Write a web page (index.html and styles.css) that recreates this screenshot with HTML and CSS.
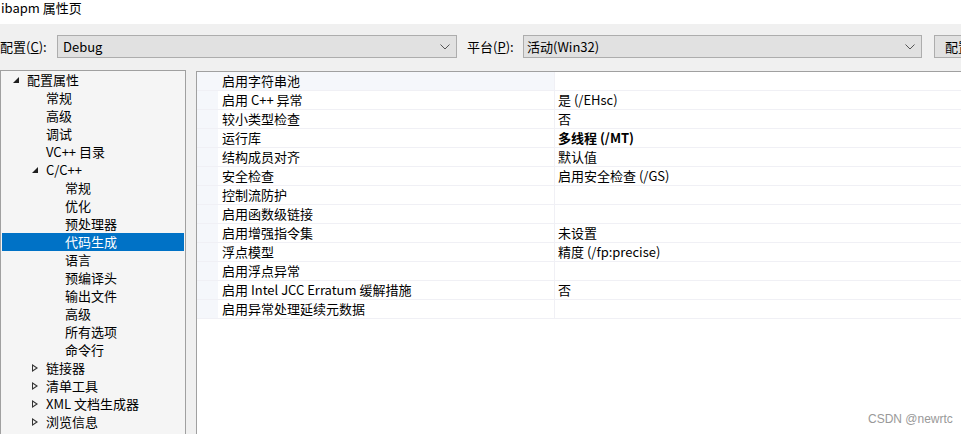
FILE: index.html
```html
<!DOCTYPE html>
<html lang="zh-CN">
<head>
  <meta charset="UTF-8" />
  <title>ibapm 属性页</title>
  <link rel="stylesheet" href="styles.css">
</head>
<body>
  <div class="title-bar">ibapm 属性页</div>

  <div class="toolbar">
    <label class="lbl">配置(<u>C</u>):</label>
    <div class="combo combo-config">
      <span>Debug</span>
      <svg class="chev" width="10" height="6" viewBox="0 0 10 6"><path d="M0.5 0.5 L5 5 L9.5 0.5" fill="none" stroke="#555" stroke-width="1"/></svg>
    </div>
    <label class="lbl lbl-plat">平台(<u>P</u>):</label>
    <div class="combo combo-plat">
      <span>活动(Win32)</span>
      <svg class="chev" width="10" height="6" viewBox="0 0 10 6"><path d="M0.5 0.5 L5 5 L9.5 0.5" fill="none" stroke="#555" stroke-width="1"/></svg>
    </div>
    <button class="mgr-btn">配置管理器</button>
  </div>

  <div class="main">
    <div class="tree">
      <div class="node lv0"><i class="tri open"></i>配置属性</div>
      <div class="node lv1">常规</div>
      <div class="node lv1">高级</div>
      <div class="node lv1">调试</div>
      <div class="node lv1">VC++ 目录</div>
      <div class="node lv1"><i class="tri open"></i>C/C++</div>
      <div class="node lv2">常规</div>
      <div class="node lv2">优化</div>
      <div class="node lv2">预处理器</div>
      <div class="node lv2 selected">代码生成</div>
      <div class="node lv2">语言</div>
      <div class="node lv2">预编译头</div>
      <div class="node lv2">输出文件</div>
      <div class="node lv2">高级</div>
      <div class="node lv2">所有选项</div>
      <div class="node lv2">命令行</div>
      <div class="node lv1"><i class="tri closed"></i>链接器</div>
      <div class="node lv1"><i class="tri closed"></i>清单工具</div>
      <div class="node lv1"><i class="tri closed"></i>XML 文档生成器</div>
      <div class="node lv1"><i class="tri closed"></i>浏览信息</div>
    </div>

    <div class="props">
      <div class="row first"><div class="name">启用字符串池</div><div class="val"></div></div>
      <div class="row"><div class="name">启用 C++ 异常</div><div class="val">是 (/EHsc)</div></div>
      <div class="row"><div class="name">较小类型检查</div><div class="val">否</div></div>
      <div class="row"><div class="name">运行库</div><div class="val bold">多线程 (/MT)</div></div>
      <div class="row"><div class="name">结构成员对齐</div><div class="val">默认值</div></div>
      <div class="row"><div class="name">安全检查</div><div class="val">启用安全检查 (/GS)</div></div>
      <div class="row"><div class="name">控制流防护</div><div class="val"></div></div>
      <div class="row"><div class="name">启用函数级链接</div><div class="val"></div></div>
      <div class="row"><div class="name">启用增强指令集</div><div class="val">未设置</div></div>
      <div class="row"><div class="name">浮点模型</div><div class="val">精度 (/fp:precise)</div></div>
      <div class="row"><div class="name">启用浮点异常</div><div class="val"></div></div>
      <div class="row"><div class="name">启用 Intel JCC Erratum 缓解措施</div><div class="val">否</div></div>
      <div class="row"><div class="name">启用异常处理延续元数据</div><div class="val"></div></div>
    </div>
  </div>

  <div class="watermark">CSDN @newrtc</div>
</body>
</html>
```

FILE: styles.css
```css
* {
  box-sizing: border-box;
  margin: 0;
  padding: 0;
}
html, body {
  width: 961px;
  height: 434px;
  overflow: hidden;
  font-family: "Noto Sans CJK SC", "Noto Sans", sans-serif;
  font-size: 13px;
  color: #000;
  background: #f0f0f0;
}

.title-bar {
  height: 24px;
  line-height: 16px;
  background: #fff;
  padding-left: 1px;
  font-size: 13px;
  white-space: nowrap;
}

.toolbar {
  display: flex;
  align-items: center;
  height: 46px;
  padding-bottom: 1px;
  white-space: nowrap;
  overflow: hidden;
}
.lbl {
  flex: none;
  width: 57px;
  line-height: 23px;
}
.lbl u {
  text-decoration-thickness: 1px;
}
.lbl-plat {
  width: 56px;
  margin-left: 10px;
}
.combo {
  flex: none;
  display: flex;
  align-items: center;
  justify-content: space-between;
  height: 23px;
  background: #e1e1e1;
  border: 1px solid #adadad;
  padding: 0 6px 0 5px;
}
.combo span {
  line-height: 20px;
}
.combo-config {
  width: 400px;
}
.combo-plat {
  width: 399px;
  padding-left: 3px;
}
.chev {
  display: block;
}
.mgr-btn {
  flex: none;
  margin-left: 12px;
  height: 23px;
  padding: 0 10px;
  background: #e1e1e1;
  border: 1px solid #adadad;
  font-family: inherit;
  font-size: 13px;
  white-space: nowrap;
  text-align: left;
}

.main {
  display: flex;
  align-items: flex-start;
  height: 364px;
}

.tree {
  flex: none;
  width: 186px;
  height: 380px;
  background: #f5f5f5;
  border: 1px solid #a0a0a0;
  padding: 0 1px 0 1px;
  white-space: nowrap;
}
.node {
  position: relative;
  height: 18px;
  line-height: 17px;
}
.node.lv0 { padding-left: 25px; }
.node.lv1 { padding-left: 44px; }
.node.lv2 { padding-left: 63px; }
.node.selected {
  background: #0072c6;
  color: #fff;
}
.tri {
  position: absolute;
  top: 5px;
  width: 7px;
  height: 8px;
}
.lv0 .tri { left: 11px; }
.lv1 .tri { left: 30px; }
.tri.open {
  top: 6px;
  width: 0;
  height: 0;
  border-left: 6px solid transparent;
  border-bottom: 6px solid #1e1e1e;
}
.tri.closed {
  width: 0;
  height: 0;
  border-top: 4.5px solid transparent;
  border-bottom: 4.5px solid transparent;
  border-left: 6px solid #333;
}
.tri.closed::after {
  content: "";
  position: absolute;
  left: -5px;
  top: -2.5px;
  border-top: 2.5px solid transparent;
  border-bottom: 2.5px solid transparent;
  border-left: 3.5px solid #f5f5f5;
}

.props {
  flex: 1;
  margin-left: 10px;
  margin-top: 1px;
  height: 380px;
  background: #fff;
  border-top: 1px solid #a0a0a0;
  border-left: 1px solid #a0a0a0;
  white-space: nowrap;
}
.row {
  display: flex;
  height: 19px;
  line-height: 18px;
  border-bottom: 1px solid #f0f0f5;
  background: linear-gradient(90deg, #f5f7fb 21px, transparent 21px);
}
.row .name {
  width: 358px;
  padding-left: 25px;
  border-right: 1px solid #f0f0f5;
}
.row.first .name {
  background: #f5f7fb;
}
.row .val {
  flex: 1;
  padding-left: 3px;
}
.row .val.bold {
  font-weight: bold;
}

.watermark {
  position: absolute;
  left: 868px;
  top: 412px;
  font-family: "Liberation Sans", sans-serif;
  font-size: 12px;
  color: #999;
}
```
